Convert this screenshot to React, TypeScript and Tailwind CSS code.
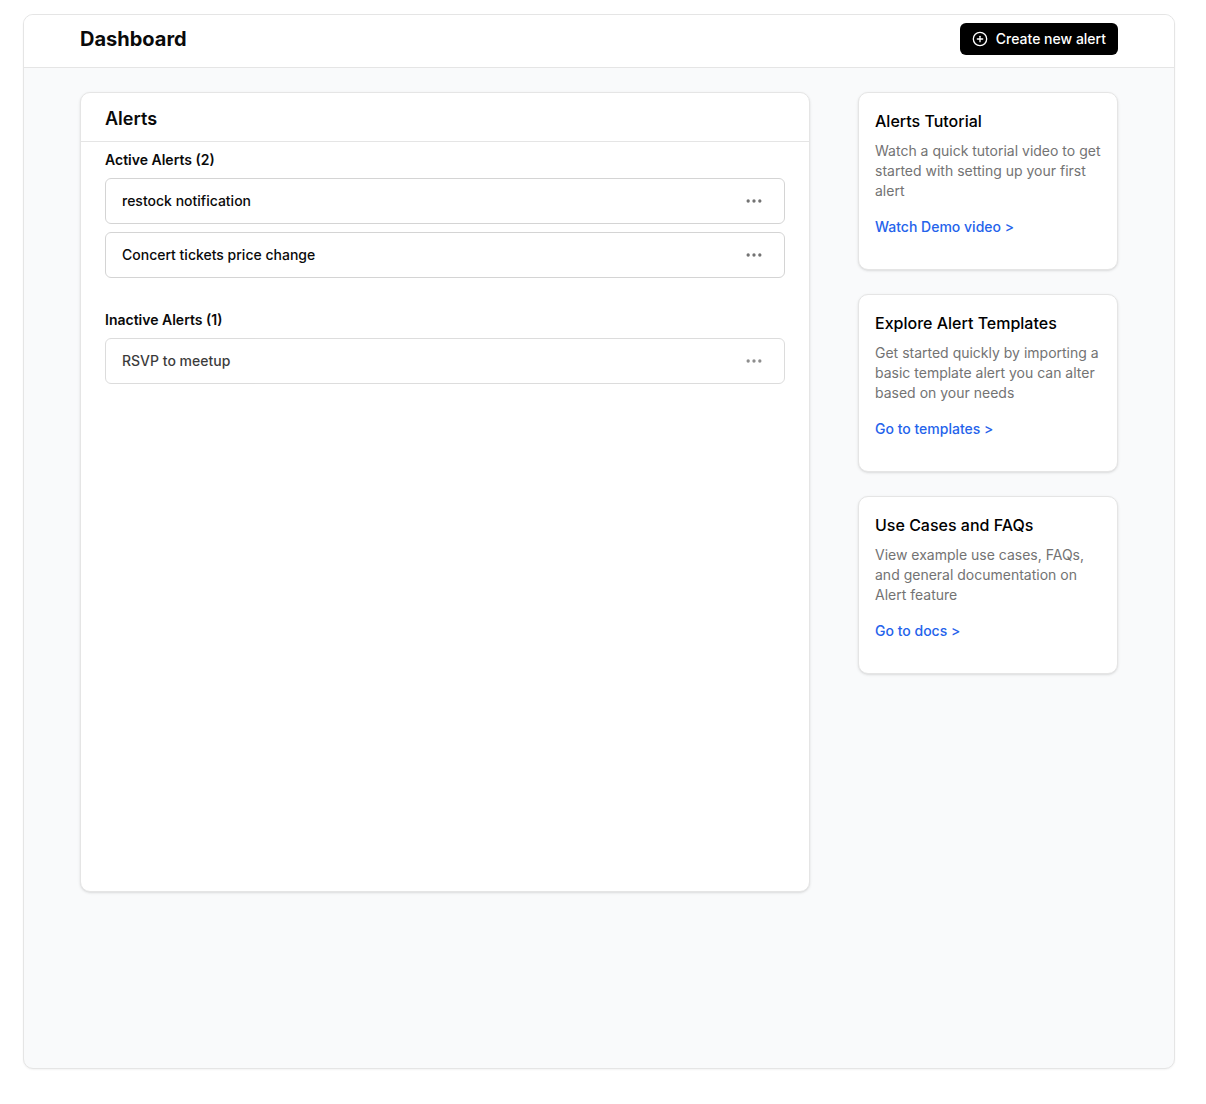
import { CirclePlus, Ellipsis } from "lucide-react";

const ACTIVE_ALERTS = ["restock notification", "Concert tickets price change"];
const INACTIVE_ALERTS = ["RSVP to meetup"];

const RESOURCES = [
  {
    title: "Alerts Tutorial",
    body: "Watch a quick tutorial video to get started with setting up your first alert",
    link: "Watch Demo video >",
  },
  {
    title: "Explore Alert Templates",
    body: "Get started quickly by importing a basic template alert you can alter based on your needs",
    link: "Go to templates >",
  },
  {
    title: "Use Cases and FAQs",
    body: "View example use cases, FAQs, and general documentation on Alert feature",
    link: "Go to docs >",
  },
];

function AlertRow({ name, inactive = false }: { name: string; inactive?: boolean }) {
  return (
    <li
      className={
        inactive
          ? "flex items-center justify-between rounded-md border border-neutral-300 px-4 py-2 opacity-80"
          : "flex items-center justify-between rounded-md border border-neutral-300 px-4 py-2"
      }
    >
      <span className="text-sm font-medium">{name}</span>
      <button
        type="button"
        aria-label={`Options for ${name}`}
        className="flex h-7 w-7 items-center justify-center text-neutral-500"
      >
        <Ellipsis className="size-5" />
      </button>
    </li>
  );
}

function AlertGroup({ title, names, inactive }: { title: string; names: string[]; inactive?: boolean }) {
  return (
    <section>
      <h3 className="mb-2 text-sm font-semibold">
        {title} ({names.length})
      </h3>
      <ul className="flex flex-col gap-2">
        {names.map((name) => (
          <AlertRow key={name} name={name} inactive={inactive} />
        ))}
      </ul>
    </section>
  );
}

export default function App() {
  return (
    <div className="flex min-h-screen flex-col bg-white pt-3.5 pr-[31px] pb-[35px] pl-[23px] font-['Inter',sans-serif] text-neutral-950">
      <div className="flex flex-1 flex-col overflow-hidden rounded-[10px] border border-neutral-200 bg-gray-50 shadow-xs">
        <header className="flex items-start justify-between border-b border-neutral-200 bg-white px-14 pt-2 pb-3">
          <h1 className="text-xl leading-8 font-bold">Dashboard</h1>
          <button
            type="button"
            className="flex h-8 items-center gap-2 rounded-md bg-black px-3 text-sm font-medium text-white"
          >
            <CirclePlus className="size-4" />
            Create new alert
          </button>
        </header>
        <main className="flex items-start gap-12 px-14 pt-6 pb-6">
          <div className="min-h-[800px] min-w-0 flex-1 rounded-[10px] border border-neutral-200 bg-white shadow-sm">
            <h2 className="border-b border-neutral-200 px-6 pt-3 pb-2 text-lg font-semibold">Alerts</h2>
            <div className="flex flex-col gap-8 px-6 pt-2">
              <AlertGroup title="Active Alerts" names={ACTIVE_ALERTS} />
              <AlertGroup title="Inactive Alerts" names={INACTIVE_ALERTS} inactive />
            </div>
          </div>
          <aside className="flex w-[260px] shrink-0 flex-col gap-6">
            {RESOURCES.map((r) => (
              <section key={r.title} className="rounded-[10px] border border-neutral-200 bg-white px-4 pt-4 pb-8 shadow-sm">
                <h2 className="text-base font-medium text-black">{r.title}</h2>
                <p className="mt-2 text-sm text-neutral-500">{r.body}</p>
                <a href="#" className="mt-4 block text-sm font-medium text-[#2563eb]">
                  {r.link}
                </a>
              </section>
            ))}
          </aside>
        </main>
      </div>
    </div>
  );
}
